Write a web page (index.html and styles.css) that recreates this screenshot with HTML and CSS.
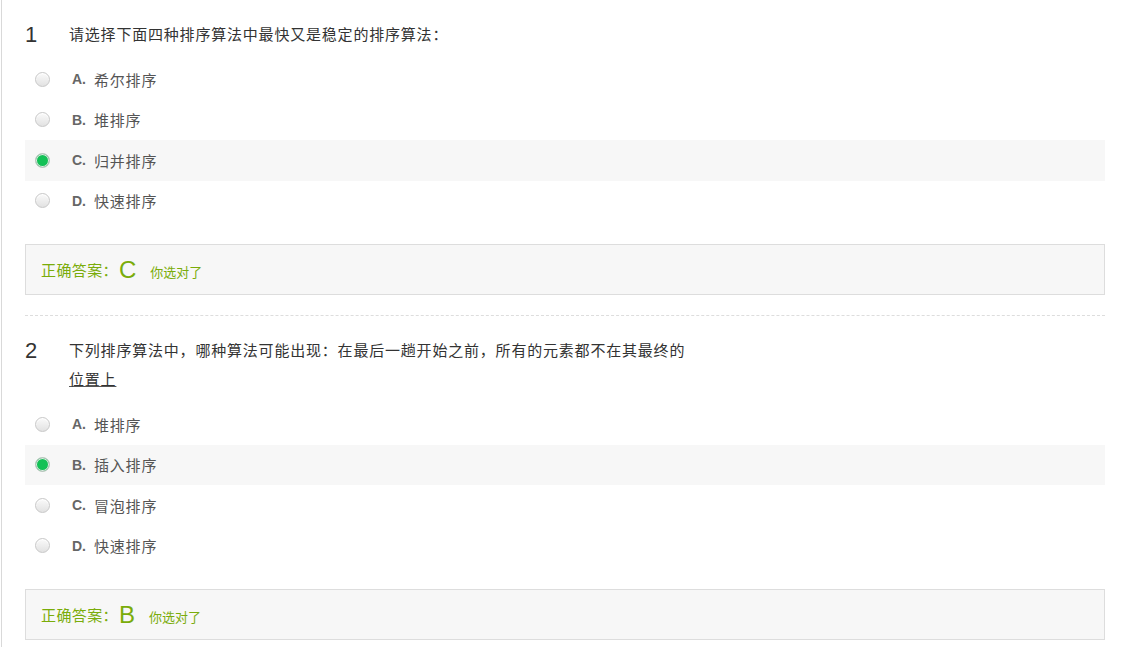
FILE: index.html
```html
<!DOCTYPE html>
<html lang="zh-CN">
<head>
    <meta charset="UTF-8">
    <title>排序算法测验</title>
    <link rel="stylesheet" href="styles.css">
</head>
<body>
<div class="paper">

    <!-- 第 1 题 -->
    <div class="question">
        <div class="q-head">
            <span class="q-num">1</span>
            <div class="q-text">请选择下面四种排序算法中最快又是稳定的排序算法：</div>
        </div>
        <ul class="options">
            <li class="option"><span class="radio"></span><b>A.</b>希尔排序</li>
            <li class="option"><span class="radio"></span><b>B.</b>堆排序</li>
            <li class="option checked"><span class="radio"></span><b>C.</b>归并排序</li>
            <li class="option"><span class="radio"></span><b>D.</b>快速排序</li>
        </ul>
        <div class="answer">
            正确答案：<span class="answer-key">C</span><span class="answer-note">你选对了</span>
        </div>
    </div>

    <!-- 第 2 题 -->
    <div class="question">
        <div class="q-head">
            <span class="q-num">2</span>
            <div class="q-text">下列排序算法中，哪种算法可能出现：在最后一趟开始之前，所有的元素都不在其最终的<u>位置上</u></div>
        </div>
        <ul class="options">
            <li class="option"><span class="radio"></span><b>A.</b>堆排序</li>
            <li class="option checked"><span class="radio"></span><b>B.</b>插入排序</li>
            <li class="option"><span class="radio"></span><b>C.</b>冒泡排序</li>
            <li class="option"><span class="radio"></span><b>D.</b>快速排序</li>
        </ul>
        <div class="answer">
            正确答案：<span class="answer-key">B</span><span class="answer-note">你选对了</span>
        </div>
    </div>

</div>
</body>
</html>
```

FILE: styles.css
```css
body {
    margin: 0;
    background-color: #fff;
    font-family: "Liberation Sans", "Noto Sans CJK SC", sans-serif;
    color: #333;
}

.paper {
    width: 1080px;
    margin-left: 1px;
    padding-left: 23px;
    border-left: 1px solid #d9d9d9;
    min-height: 647px;
}

.question {
    padding-top: 20px;
    padding-bottom: 20px;
    border-bottom: 1px dashed #ddd;
}

.question:last-child {
    border-bottom: none;
}

.q-head {
    display: flex;
}

.q-num {
    width: 44px;
    font-size: 22px;
    line-height: 29px;
    color: #333;
}

.q-text {
    width: 625px;
    font-size: 15px;
    letter-spacing: 0.8px;
    line-height: 29px;
    color: #333;
}

.q-text u {
    text-decoration-color: #555;
}

.options {
    list-style: none;
    margin: 10px 0 0 0;
    padding: 0;
}

.option {
    display: flex;
    align-items: center;
    height: 40.5px;
    padding-left: 10px;
    font-size: 15px;
    letter-spacing: 0.8px;
    color: #555;
}

.option b {
    margin-left: 22px;
    margin-right: 8px;
    font-size: 14px;
    letter-spacing: 0;
    font-weight: bold;
    color: #666;
}

.option.checked {
    background-color: #f7f7f7;
}

.radio {
    width: 13px;
    height: 13px;
    border-radius: 50%;
    border: 1px solid #c8c8c8;
    background: linear-gradient(#fafafa, #e2e2e2);
    box-shadow: inset 0 1px 1px #fff;
}

.option.checked .radio {
    background: #13c156;
    border-color: #c6c6c6;
    box-shadow: inset 0 0 0 1px #e8e8e8;
}

.answer {
    display: flex;
    align-items: center;
    margin-top: 23px;
    height: 49px;
    padding-left: 15px;
    border: 1px solid #ddd;
    background-color: #f7f7f7;
    font-size: 15px;
    letter-spacing: 0.4px;
    color: #7aac0a;
}

.answer-key {
    font-size: 24px;
    letter-spacing: 0;
    margin-left: 1px;
    margin-right: 14px;
}

.answer-note {
    font-size: 13px;
    letter-spacing: 0;
    margin-top: 3px;
}
```
